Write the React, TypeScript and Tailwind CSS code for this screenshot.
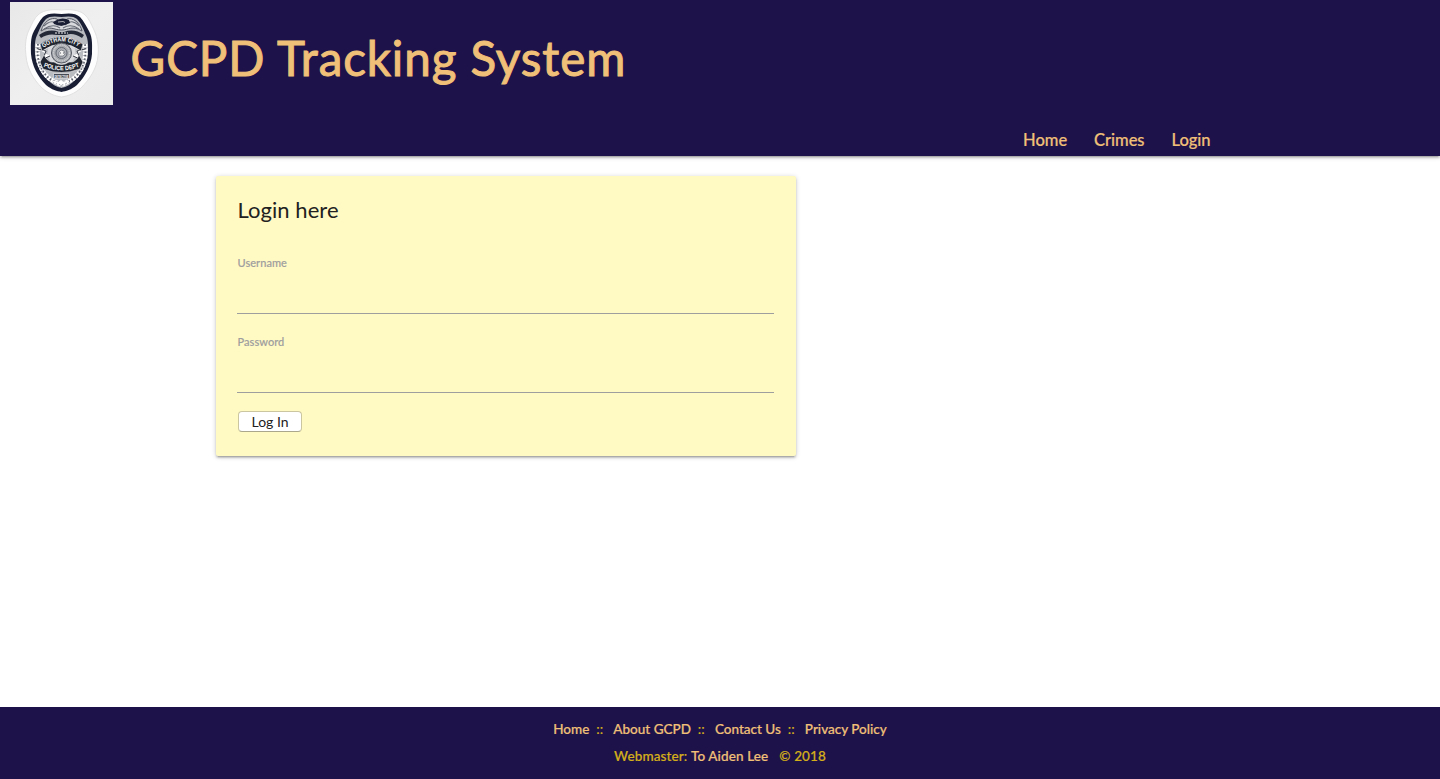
import React from "react";

function Badge() {
  return (
    <svg viewBox="0 0 103 103" className="block h-[103px] w-[103px] shrink-0" role="img" aria-label="Gotham City Police Department badge">
      <defs>
        <linearGradient id="paper" x1="0" y1="0" x2="1" y2="1">
          <stop offset="0" stopColor="#e8e8e8" />
          <stop offset="0.5" stopColor="#efefef" />
          <stop offset="1" stopColor="#ebebeb" />
        </linearGradient>
        <path id="arcTop" d="M33.5 46 Q51.5 32.5 70 46" />
        <path id="arcBottom" d="M33.5 64.5 Q51.5 72 70 64.5" />
      </defs>
      <rect width="103" height="103" fill="url(#paper)" />
      <path d="M51.5 8 C43 7 34 8 29 12 C24 16 22 22 19 28 C15 36 15 46 16 54 C17 66 23 77 32 86 C39 92 45 94 51.5 95 C58 94 64 92 71 86 C80 77 87 66 88 54 C89 46 88 36 84 28 C81 22 79 16 74 12 C69 8 60 7 51.5 8Z" fill="#fdfdfd" stroke="#e1e1e1" strokeWidth="1" />
      <path d="M51.5 12 C44 11 37 11 33 15 C29 19 27 24 24 29 C20 36 21 45 21 52 C22 64 28 75 36 83 C42 88 47 89 51.5 90 C56 89 61 88 67 83 C75 75 81 64 82 52 C82 45 83 36 79 29 C76 24 74 19 70 15 C66 11 59 11 51.5 12Z" fill="#1a1e35" />
      <path d="M51.5 15 C45 14 39 14 36 17 C32 21 30 26 28 31 C24 38 25 45 25 52 C26 63 31 72 39 79 C44 84 48 85 51.5 86 C55 85 59 84 64 79 C72 72 77 63 78 52 C78 45 79 38 75 31 C73 26 71 21 67 17 C64 14 58 14 51.5 15Z" fill="#b9bcc1" />
      <path d="M28 42 C26 58 31 70 40 77 L51.5 83 L63 77 C72 70 77 58 75 42" fill="none" stroke="#ffffff" strokeWidth="4.5" strokeDasharray="3 1" />
      <path d="M28 42 C26 58 31 70 40 77 L51.5 83 L63 77 C72 70 77 58 75 42" fill="none" stroke="#5b5f6a" strokeWidth="1.8" strokeDasharray="1.5 2" />
      <path d="M31 29 C34 19 41 15 47 17 L51.5 24 L57 17 C63 15 70 21 72 29 C62 23 59 28 51.5 28 C43 28 41 23 31 29Z" fill="#d8dadd" stroke="#555965" strokeWidth="1" />
      <path d="M34 24 Q42 16 48 23 M34 27 Q43 21 50 26 M69 24 Q62 16 55 23 M69 27 Q61 21 53 26" fill="none" stroke="#686c77" strokeWidth="1.1" />
      <path d="M43 20 Q51 14 59 18 L60 21 L55 23 Q50 25 44 22Z" fill="#1a1e35" />
      <path d="M48 20 l5 -0.5 l2 1" fill="none" stroke="#cccccc" strokeWidth="0.8" />
      <path d="M29 33 Q39 26 49 30 L54 30 Q64 26 74 33 L72 36 Q63 30 56 33 L47 33 Q38 31 31 36Z" fill="#242938" />
      <path d="M45 31 h13" stroke="#eeeeee" strokeWidth="1" strokeDasharray="2 1" />
      <circle cx="51.5" cy="51" r="14" fill="#d9dadd" />
      <path d="M28 47 L36 49 L33 57 L40 54 M75 47 L67 49 L70 57 L63 54" fill="#ffffff" stroke="#353943" strokeWidth="1" />
      <path d="M30 42 Q51 27 73 42 L71 49 Q51.5 35 32 49Z" fill="#1e2430" stroke="#f5f5f5" strokeWidth="0.6" />
      <text fill="#ffffff" className="font-['Liberation_Sans'] text-[6.2px] font-bold"><textPath href="#arcTop" textLength="37.5" lengthAdjust="spacingAndGlyphs">GOTHAM CITY</textPath></text>
      <circle cx="51.5" cy="51" r="10" fill="#a5a8ad" stroke="#555963" strokeWidth="1" />
      <circle cx="51.5" cy="51" r="8" fill="none" stroke="#d0d1d4" strokeWidth="1.4" strokeDasharray="1.1 0.7" />
      <circle cx="51.5" cy="51" r="5.5" fill="#a9acb2" stroke="#656973" strokeWidth="1" />
      <path d="M49 50 l2 -2 3 1 1 3 -2 2 h-4Z" fill="#f0f0f0" stroke="#5b606a" strokeWidth="0.6" />
      <path d="M50 51 h1 m2 0 h1" stroke="#2d323d" strokeWidth="0.8" />
      <path d="M34 53 Q38 61 44 60 Q51.5 65 59 60 Q66 61 69 53 L73 60 L70 67 Q51.5 74 33 67 L30 60Z" fill="#202530" stroke="#efefef" strokeWidth="0.6" />
      <text fill="#ffffff" className="font-['Liberation_Sans'] text-[6.2px] font-bold"><textPath href="#arcBottom" textLength="37" lengthAdjust="spacingAndGlyphs">POLICE DEPT</textPath></text>
      <path d="M43.5 71.5 h16 v5 h-16Z" fill="#454a55" stroke="#eeeeee" strokeWidth="0.7" />
      <text x="44.5" y="75.7" textLength="14" lengthAdjust="spacingAndGlyphs" fill="#ffffff" className="font-['Liberation_Sans'] text-[4px] font-bold">DETECTIVE</text>
      <path d="M43 79 L51 82 L59 79 M47 83 L51 79 L55 83" fill="none" stroke="#ffffff" strokeWidth="1.8" />
    </svg>
  );
}

function Field({ label, type }: { label: string; type: string }) {
  return (
    <label className="block h-[79px] pt-[1px]">
      <span className="block h-4 pl-[0.5px] text-[11px] leading-4 font-medium tracking-[0.05px] text-[#9e9e9e] [-webkit-text-stroke:0.15px]">{label}</span>
      <input type={type} className="block h-[43px] w-full border-b border-[#9e9e9e] bg-transparent text-base outline-none" />
    </label>
  );
}

export default function App() {
  return (
    <div className="flex h-[779px] w-full flex-col bg-white font-['Lato',sans-serif]">
      <header className="relative h-[156px] shrink-0 bg-[#1e124a] text-[#f0c078] shadow-[0_2px_2px_0_rgba(0,0,0,0.14),0_3px_1px_-2px_rgba(0,0,0,0.12),0_1px_5px_0_rgba(0,0,0,0.2)]">
        <div className="flex h-[124px] pt-[2px] pl-[10px]">
          <Badge />
          <h1 className="ml-[17.5px] pt-[22px] text-[47.5px] leading-[67px] font-normal tracking-[0.94px] whitespace-nowrap [-webkit-text-stroke:1px_#f0c078]">GCPD Tracking System</h1>
        </div>
        <nav className="flex h-8 justify-end gap-[27px] pr-[229.5px] text-[16.5px] leading-8 font-medium tracking-[-0.03px] [-webkit-text-stroke:0.2px_#f0c078]">
          <a href="#home">Home</a>
          <a href="#crimes">Crimes</a>
          <a href="#login">Login</a>
        </nav>
      </header>
      <main className="flex-1 pt-5 pl-[216px]">
        <form className="h-[280px] w-[580px] rounded-[2px] bg-[#fff9c4] px-[22px] pt-[18px] shadow-[0_2px_2px_0_rgba(0,0,0,0.14),0_3px_1px_-2px_rgba(0,0,0,0.12),0_1px_5px_0_rgba(0,0,0,0.2)]">
          <h2 className="mb-[28px] -ml-[0.5px] h-8 text-[22px] leading-8 font-normal tracking-[0.05px] text-[#212121]">Login here</h2>
          <div className="-ml-px">
            <Field label="Username" type="text" />
            <Field label="Password" type="password" />
          </div>
          <button type="button" className="-mt-px block h-[21px] w-[64px] rounded-[4px] border border-[#cbc69f] border-b-[#aaa78c] bg-white text-[14px] leading-[18px] text-[#222222]">Log In</button>
        </form>
      </main>
      <footer className="h-[72px] shrink-0 bg-[#1e124a] pt-[9px] text-center text-[13.5px] leading-[27px] font-medium text-[#d4af1a]">
        <div className="flex justify-center whitespace-pre [-webkit-text-stroke:0.2px]">
          <a href="#home" className="text-[#f0c078]">Home</a>
          <span className="w-6 text-center">:: </span>
          <a href="#about" className="text-[#f0c078]">About GCPD</a>
          <span className="w-6 text-center">:: </span>
          <a href="#contact" className="text-[#f0c078]">Contact Us</a>
          <span className="w-6 text-center">:: </span>
          <a href="#privacy" className="text-[#f0c078]">Privacy Policy</a>
        </div>
        <div className="flex justify-center tracking-[0.12px] whitespace-pre [-webkit-text-stroke:0.2px]">
          <span>Webmaster: </span>
          <a href="#webmaster" className="text-[#f0c078]">To Aiden Lee</a>
          <span className="ml-[11px]">© 2018</span>
        </div>
      </footer>
    </div>
  );
}
